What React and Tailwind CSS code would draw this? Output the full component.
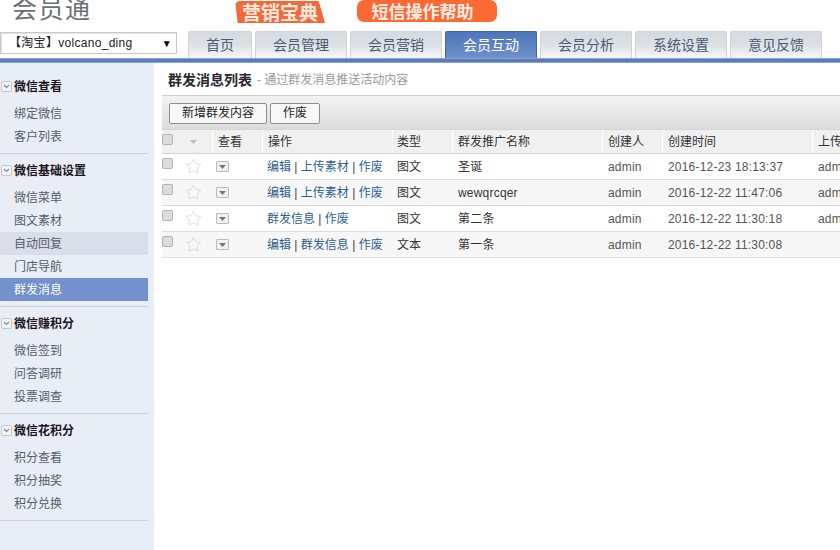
import { Star } from 'lucide-react'

const FONT = '"Liberation Sans", "Noto Sans CJK SC", sans-serif'

const TABS = [
  { label: '首页', width: 'w-[64px]' },
  { label: '会员管理', width: 'w-[92px]' },
  { label: '会员营销', width: 'w-[92px]' },
  { label: '会员互动', width: 'w-[92px]', active: true },
  { label: '会员分析', width: 'w-[92px]' },
  { label: '系统设置', width: 'w-[92px]' },
  { label: '意见反馈', width: 'w-[92px]' },
]

const MENU = [
  { title: '微信查看', items: ['绑定微信', '客户列表'] },
  { title: '微信基础设置', items: ['微信菜单', '图文素材', '自动回复', '门店导航', '群发消息'] },
  { title: '微信赚积分', items: ['微信签到', '问答调研', '投票调查'] },
  { title: '微信花积分', items: ['积分查看', '积分抽奖', '积分兑换'] },
]

const COLS = 'grid grid-cols-[20px_30px_50px_130px_60px_150px_60px_150px_120px]'

const ROWS = [
  { ops: ['编辑', '上传素材', '作废'], type: '图文', name: '圣诞', time: '2016-12-23 18:13:37', up: 'admin' },
  { ops: ['编辑', '上传素材', '作废'], type: '图文', name: 'wewqrcqer', time: '2016-12-22 11:47:06', up: 'admin', alt: true },
  { ops: ['群发信息', '作废'], type: '图文', name: '第二条', time: '2016-12-22 11:30:18', up: 'admin' },
  { ops: ['编辑', '群发信息', '作废'], type: '文本', name: '第一条', time: '2016-12-22 11:30:08', up: '', alt: true },
]

function Collapse() {
  return (
    <span className="flex h-[11px] w-[11px] shrink-0 items-center justify-center rounded-[2px] border border-[#c3c8d2] bg-[#f1f3f7]">
      <svg width="7" height="5" viewBox="0 0 7 5"><path d="M1 1l2.5 2.5L6 1" fill="none" stroke="#7d8798" strokeWidth="1.2" /></svg>
    </span>
  )
}

function Checkbox() {
  return <span className="block h-[11px] w-[11px] rounded-[2px] border border-[#b4b4b4] bg-[#dcdcdc]" />
}

function HeadCell({ children, className = 'pl-[5px]' }) {
  return (
    <div className={`flex h-full items-center border-l border-white ${className}`}>{children}</div>
  )
}

export default function App() {
  return (
    <div className="flex h-[550px] w-[840px] flex-col overflow-hidden bg-white text-[12px] text-[#333]" style={{ fontFamily: FONT }}>
      {/* top */}
      <header className="h-[31px] shrink-0 overflow-hidden">
        <div className="flex items-start">
          <div className="ml-[12px] mt-[-9px] w-[223px] text-[25px] leading-[36px] tracking-[1.5px] text-[#6b6f76]">会员通</div>
          <div className="mt-[1px] flex h-[22px] w-[90px] items-center justify-center rounded-tl-[5px] bg-[#f26a3a] pt-[3px] text-[19px] font-bold leading-none text-[#ffe9dd] [clip-path:polygon(0_0,93%_0,100%_100%,3%_100%)]">营销宝典</div>
          <div className="ml-[32px] flex h-[22px] w-[140px] items-center justify-center rounded-[7px] bg-[#fb6a35] pr-[9px] pt-[2px] text-[17px] font-bold leading-none text-[#ffeee5]">短信操作帮助</div>
        </div>
      </header>

      <div className="flex h-[27px] shrink-0 items-start">
        <div className="mt-[1px] flex h-[22px] w-[177px] items-center justify-between border border-[#c8c8c8] pl-[8px] pr-[4px] text-[12px] tracking-[0.3px] text-[#222] shadow-[inset_1px_1px_1px_#e4e4e4]">
          <span>【淘宝】volcano_ding</span>
          <span className="text-[10px] text-black">▼</span>
        </div>
        <nav className="ml-[11px] flex gap-[3px]">
          {TABS.map(tab => (
            <div
              key={tab.label}
              className={`flex h-[27px] items-center justify-center rounded-t-[2px] border border-b-0 text-[14px] ${tab.width} ${
                tab.active
                  ? 'border-[#3f66a8] bg-gradient-to-b from-[#4d75bb] to-[#6f90c9] text-white'
                  : 'border-[#d0d3d8] bg-gradient-to-b from-[#d5dae1] via-[#dde1e6] to-[#f6f7f8] text-[#4a5a70]'
              }`}
            >
              {tab.label}
            </div>
          ))}
        </nav>
      </div>
      <div className="h-[5px] shrink-0 border-y border-[#88a2cd] bg-[#5b7db8]" />

      <div className="flex min-h-0 flex-1">
        {/* sidebar */}
        <aside className="w-[154px] shrink-0 bg-[#e9edf5] pt-[13px]">
          {MENU.map(group => (
            <section key={group.title} className="w-[148px] border-b border-[#cdd3de] pb-[5px] [&:not(:first-child)]:mt-[6px]">
              <div className="flex h-[20px] items-center gap-[2px] pl-[1px] pt-[1px] text-[12px] font-bold text-[#1a1420]">
                <Collapse />
                <span>{group.title}</span>
              </div>
              <ul className="mt-[6px]">
                {group.items.map(item => (
                  <li
                    key={item}
                    className={`flex h-[23px] items-center pl-[14px] text-[12px] ${
                      item === '群发消息'
                        ? 'bg-[#7391cc] text-white'
                        : item === '自动回复'
                          ? 'bg-[#d9deea] text-[#555c6c]'
                          : 'text-[#555c6c]'
                    }`}
                  >
                    {item}
                  </li>
                ))}
              </ul>
            </section>
          ))}
        </aside>

        {/* content */}
        <main className="min-w-0 flex-1 pl-[8px]">
          <div className="flex h-[32px] items-center pl-[6px] pt-[2px]">
            <span className="text-[14px] font-bold text-[#2d2630]">群发消息列表</span>
            <span className="ml-[5px] text-[12px] text-[#999]">- 通过群发消息推送活动内容</span>
          </div>
          <div className="flex h-[34px] items-center gap-[3px] border-t border-[#d0d0d0] bg-gradient-to-b from-[#f3f3f3] to-[#dcdcdc] pl-[7px] pt-[1px]">
            <button type="button" className="h-[21px] w-[98px] rounded-[2px] border border-[#8e8e8e] bg-[#f8f8f8] text-[12px] text-[#222]">新增群发内容</button>
            <button type="button" className="h-[21px] w-[50px] rounded-[2px] border border-[#8e8e8e] bg-[#f8f8f8] text-[12px] text-[#222]">作废</button>
          </div>

          <div className="w-[800px]">
            <div className={`${COLS} h-[25px] items-center border-y border-[#d4d4d4] bg-[#f0f0f0] text-[12px] text-[#333]`}>
              <div className="mb-[4px] flex"><Checkbox /></div>
              <div className="flex pl-[8px]">
                <svg width="7" height="4" viewBox="0 0 7 4"><path d="M0 0h7L3.5 4z" fill="#bdbdbd" /></svg>
              </div>
              <HeadCell>查看</HeadCell>
              <HeadCell>操作</HeadCell>
              <HeadCell className="pl-[4px]">类型</HeadCell>
              <HeadCell>群发推广名称</HeadCell>
              <HeadCell>创建人</HeadCell>
              <HeadCell>创建时间</HeadCell>
              <HeadCell>上传人</HeadCell>
            </div>
            {ROWS.map(row => (
              <div key={row.time} className={`${COLS} h-[26px] items-center border-b border-[#dcdcdc] ${row.alt ? 'bg-[#f7f7f7]' : 'bg-white'}`}>
                <div className="mb-[6px] flex"><Checkbox /></div>
                <div className="flex pl-[3px]"><Star size={17} strokeWidth={1} className="text-[#cfcfcf]" /></div>
                <div className="pl-[4px]">
                  <span className="flex h-[11px] w-[13px] items-center justify-center rounded-[1px] border border-[#bbb] bg-[#f2f2f2]">
                    <svg width="7" height="4" viewBox="0 0 7 4"><path d="M0 0h7L3.5 4z" fill="#777" /></svg>
                  </span>
                </div>
                <div className="pl-[5px] text-[#2f5f8f]">
                  {row.ops.map((op, i) => (
                    <span key={op}>
                      {i > 0 && <span className="text-[#444]"> | </span>}
                      {op}
                    </span>
                  ))}
                </div>
                <div className="pl-[5px]">{row.type}</div>
                <div className="pl-[6px] tracking-[0.2px]">{row.name}</div>
                <div className="pl-[6px] tracking-[0.2px] text-[#555]">admin</div>
                <div className="pl-[6px] tracking-[0.2px] text-[#555]">{row.time}</div>
                <div className="pl-[6px] tracking-[0.2px] text-[#555]">{row.up}</div>
              </div>
            ))}
          </div>
        </main>
      </div>
    </div>
  )
}
